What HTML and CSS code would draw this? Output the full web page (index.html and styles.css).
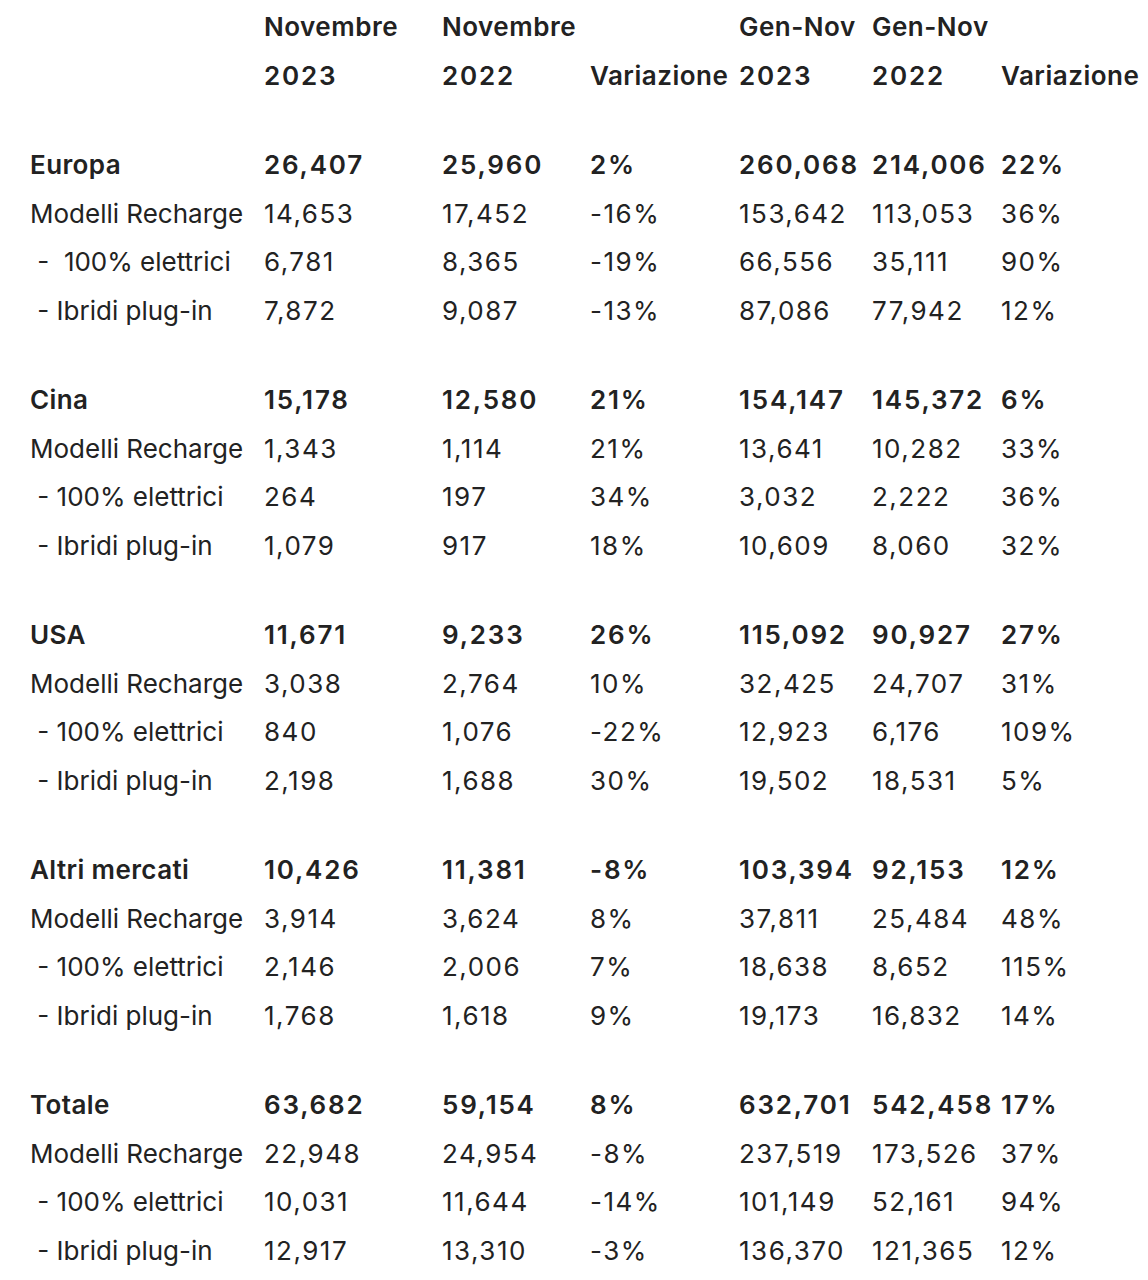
FILE: index.html
```html
<!DOCTYPE html>
<html lang="it">
<head>
<meta charset="utf-8">
<title>Vendite</title>
<link rel="stylesheet" href="styles.css">
</head>
<body>
<table class="sales">
  <colgroup>
    <col class="c-label"><col class="c1"><col class="c2"><col class="c3"><col class="c4"><col class="c5"><col class="c6">
  </colgroup>
  <thead>
    <tr class="row b"><td></td><td class="t">Novembre</td><td class="t">Novembre</td><td></td><td class="t">Gen-Nov</td><td class="t">Gen-Nov</td><td></td></tr>
    <tr class="row b"><td></td><td>2023</td><td>2022</td><td class="t">Variazione</td><td>2023</td><td>2022</td><td class="t">Variazione</td></tr>
  </thead>
  <tbody>
    <tr class="gap"><td colspan="7"></td></tr>
    <tr class="row b"><td>Europa</td><td>26,407</td><td>25,960</td><td>2%</td><td>260,068</td><td>214,006</td><td>22%</td></tr>
    <tr class="row"><td>Modelli Recharge</td><td>14,653</td><td>17,452</td><td>-16%</td><td>153,642</td><td>113,053</td><td>36%</td></tr>
    <tr class="row"><td class="sub"> -  100% elettrici</td><td>6,781</td><td>8,365</td><td>-19%</td><td>66,556</td><td>35,111</td><td>90%</td></tr>
    <tr class="row"><td class="sub"> - Ibridi plug-in</td><td>7,872</td><td>9,087</td><td>-13%</td><td>87,086</td><td>77,942</td><td>12%</td></tr>

    <tr class="gap"><td colspan="7"></td></tr>
    <tr class="row b"><td>Cina</td><td>15,178</td><td>12,580</td><td>21%</td><td>154,147</td><td>145,372</td><td>6%</td></tr>
    <tr class="row"><td>Modelli Recharge</td><td>1,343</td><td>1,114</td><td>21%</td><td>13,641</td><td>10,282</td><td>33%</td></tr>
    <tr class="row"><td class="sub"> - 100% elettrici</td><td>264</td><td>197</td><td>34%</td><td>3,032</td><td>2,222</td><td>36%</td></tr>
    <tr class="row"><td class="sub"> - Ibridi plug-in</td><td>1,079</td><td>917</td><td>18%</td><td>10,609</td><td>8,060</td><td>32%</td></tr>

    <tr class="gap"><td colspan="7"></td></tr>
    <tr class="row b"><td>USA</td><td>11,671</td><td>9,233</td><td>26%</td><td>115,092</td><td>90,927</td><td>27%</td></tr>
    <tr class="row"><td>Modelli Recharge</td><td>3,038</td><td>2,764</td><td>10%</td><td>32,425</td><td>24,707</td><td>31%</td></tr>
    <tr class="row"><td class="sub"> - 100% elettrici</td><td>840</td><td>1,076</td><td>-22%</td><td>12,923</td><td>6,176</td><td>109%</td></tr>
    <tr class="row"><td class="sub"> - Ibridi plug-in</td><td>2,198</td><td>1,688</td><td>30%</td><td>19,502</td><td>18,531</td><td>5%</td></tr>

    <tr class="gap"><td colspan="7"></td></tr>
    <tr class="row b"><td>Altri mercati</td><td>10,426</td><td>11,381</td><td>-8%</td><td>103,394</td><td>92,153</td><td>12%</td></tr>
    <tr class="row"><td>Modelli Recharge</td><td>3,914</td><td>3,624</td><td>8%</td><td>37,811</td><td>25,484</td><td>48%</td></tr>
    <tr class="row"><td class="sub"> - 100% elettrici</td><td>2,146</td><td>2,006</td><td>7%</td><td>18,638</td><td>8,652</td><td>115%</td></tr>
    <tr class="row"><td class="sub"> - Ibridi plug-in</td><td>1,768</td><td>1,618</td><td>9%</td><td>19,173</td><td>16,832</td><td>14%</td></tr>

    <tr class="gap"><td colspan="7"></td></tr>
    <tr class="row b"><td>Totale</td><td>63,682</td><td>59,154</td><td>8%</td><td>632,701</td><td>542,458</td><td>17%</td></tr>
    <tr class="row"><td>Modelli Recharge</td><td>22,948</td><td>24,954</td><td>-8%</td><td>237,519</td><td>173,526</td><td>37%</td></tr>
    <tr class="row"><td class="sub"> - 100% elettrici</td><td>10,031</td><td>11,644</td><td>-14%</td><td>101,149</td><td>52,161</td><td>94%</td></tr>
    <tr class="row"><td class="sub"> - Ibridi plug-in</td><td>12,917</td><td>13,310</td><td>-3%</td><td>136,370</td><td>121,365</td><td>12%</td></tr>
  </tbody>
</table>
</body>
</html>
```
FILE: styles.css
```css
html, body {
  margin: 0;
  padding: 0;
  background: #ffffff;
}
body {
  font-family: Inter, "Liberation Sans", Arial, sans-serif;
  color: #222222;
  font-size: 26px;
  padding: 3px 0 0 30px;
}
.sales {
  border-collapse: collapse;
  table-layout: fixed;
  width: 1118px;
}
.c-label { width: 234px; }
.c1 { width: 178px; }
.c2 { width: 148px; }
.c3 { width: 149px; }
.c4 { width: 133px; }
.c5 { width: 129px; }
.c6 { width: 147px; }
.sales td {
  padding: 0;
  white-space: nowrap;
  vertical-align: middle;
  text-align: left;
}
.sales td + td {
  letter-spacing: 1.5px;
}
.sales .b td + td {
  letter-spacing: 1.8px;
}
.sales .b td:first-child {
  letter-spacing: 0.4px;
}
.sales .b td.t {
  letter-spacing: 0.5px;
}
.row td {
  height: 48.5px;
  line-height: 48.5px;
}
.b td {
  font-weight: 600;
}
.sub {
  white-space: pre !important;
}
.gap td {
  height: 41px;
}
```
